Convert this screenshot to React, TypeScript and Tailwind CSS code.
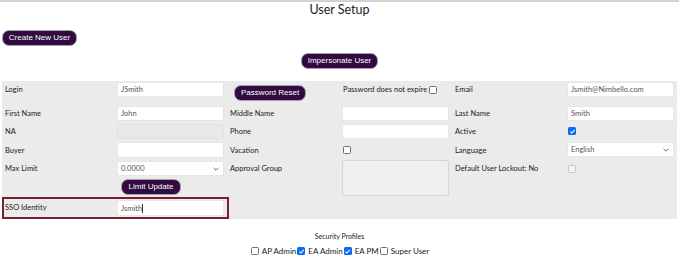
import React from "react";

const label = "text-[7.5px] leading-[15px] text-[#222] pl-[3px] whitespace-nowrap";
const inputCls =
  "w-[107px] h-[15px] bg-white border border-[#e6e6e6] text-[7.5px] leading-[13px] text-[#555] pl-[3px]";
const btn =
  "bg-[#300a40] text-white border border-[#a79dae] rounded-[7px] flex items-center justify-center font-['Liberation_Sans',Arial,sans-serif] text-[8px]";

function Check({ checked = false, disabled = false }: { checked?: boolean; disabled?: boolean }) {
  if (checked) {
    return (
      <span className="inline-flex w-[8px] h-[8px] rounded-[1.5px] bg-[#0a6cf0] items-center justify-center shrink-0">
        <svg viewBox="0 0 10 10" className="w-[7px] h-[7px]">
          <path d="M2 5.2 L4.1 7.2 L8.2 2.8" fill="none" stroke="white" strokeWidth="1.6" />
        </svg>
      </span>
    );
  }
  return (
    <span
      className={
        "inline-block w-[8px] h-[8px] rounded-[1.5px] border shrink-0 " +
        (disabled ? "border-[#c4c4c4] bg-[#f4f4f4]" : "border-[#6f6f6f] bg-white")
      }
    />
  );
}

function Select({ value }: { value: string }) {
  return (
    <div className={inputCls + " flex items-center justify-between pr-[4px]"}>
      <span>{value}</span>
      <svg viewBox="0 0 10 6" className="w-[6px] h-[4px]">
        <path d="M1 1 L5 5 L9 1" fill="none" stroke="#444" strokeWidth="1.4" />
      </svg>
    </div>
  );
}

export default function App() {
  return (
    <div className="w-[679px] h-[257px] overflow-hidden bg-white border-t-2 border-[#d2d2d2] font-['Lato',sans-serif]">
      <div className="text-center text-[12.5px] leading-[16px] text-[#222]">User Setup</div>

      <div className={btn + " ml-[2px] mt-[12px] w-[75px] h-[16px]"}>Create New User</div>

      <div className={btn + " mx-auto mt-[7px] w-[77px] h-[16px]"}>Impersonate User</div>

      <div className="ml-[2px] mt-[12px] w-[675px] h-[138px] bg-[#ebebeb] grid grid-cols-[115px_110px_115px_110px_115px_110px] grid-rows-[24px_18px_18px_19px_18px_19px_22px]">
        {/* row 1 */}
        <div className={label + " pt-[1px]"}>Login</div>
        <div className="pt-[1px]"><div className={inputCls}>JSmith</div></div>
        <div className="pt-[4px] pl-[7px]">
          <div className={btn + " w-[72px] h-[16px]"}>Password Reset</div>
        </div>
        <div className="pt-[1px] pl-[1px] flex items-center h-[17px] gap-[2px]">
          <span className="text-[7.5px] text-[#222] whitespace-nowrap">Password does not expire</span>
          <Check />
        </div>
        <div className={label + " pt-[1px]"}>Email</div>
        <div className="pt-[1px]"><div className={inputCls}>Jsmith@Nimbello.com</div></div>

        {/* row 2 */}
        <div className={label + " pt-[1px]"}>First Name</div>
        <div className="pt-[1px]"><div className={inputCls}>John</div></div>
        <div className={label + " pt-[1px]"}>Middle Name</div>
        <div className="pt-[1px]"><div className={inputCls}></div></div>
        <div className={label + " pt-[1px]"}>Last Name</div>
        <div className="pt-[1px]"><div className={inputCls}>Smith</div></div>

        {/* row 3 */}
        <div className={label + " pt-[1px]"}>NA</div>
        <div className="pt-[1px]"><div className="w-[107px] h-[15px] bg-[#e8e8e8] border border-[#e2e2e2]"></div></div>
        <div className={label + " pt-[1px]"}>Phone</div>
        <div className="pt-[1px]"><div className={inputCls}></div></div>
        <div className={label + " pt-[1px]"}>Active</div>
        <div className="pt-[4px] pl-[1px] flex items-start"><Check checked /></div>

        {/* row 4 */}
        <div className={label + " pt-[2px]"}>Buyer</div>
        <div className="pt-[1px]"><div className={inputCls + " h-[16px]"}></div></div>
        <div className={label + " pt-[2px]"}>Vacation</div>
        <div className="pt-[5px] pl-[1px] flex items-start"><Check /></div>
        <div className={label + " pt-[2px]"}>Language</div>
        <div className="pt-[1px]"><Select value="English" /></div>

        {/* row 5 */}
        <div className={label + " pt-[1px]"}>Max Limit</div>
        <div className="pt-[1px]"><Select value="0.0000" /></div>
        <div className={label + " pt-[1px]"}>Approval Group</div>
        <div className="row-span-2">
          <div className="w-[107px] h-[36px] bg-[#efefef] border border-[#d6d6d6] rounded-[2px]"></div>
        </div>
        <div className={label + " pt-[1px]"}>Default User Lockout: No</div>
        <div className="pt-[5px] pl-[1px] flex items-start"><Check disabled /></div>

        {/* row 6 */}
        <div></div>
        <div className="pt-[1px] pl-[4px]">
          <div className={btn + " w-[60px] h-[16px]"}>Limit Update</div>
        </div>
        <div></div>
        <div></div>
        <div></div>

        {/* row 7 */}
        <div className="col-span-2 w-[227px] border-2 border-[#7d1c2c] flex items-center">
          <div className="w-[113px] text-[7.5px] text-[#222] pl-[1px]">SSO Identity</div>
          <div className={inputCls + " h-[16px] flex items-center"}>
            Jsmith<span className="inline-block w-[0.5px] h-[9px] bg-[#333]"></span>
          </div>
        </div>
      </div>

      <div className="mt-[12px] text-center text-[7px] leading-[10px] text-[#222]">Security Profiles</div>

      <div className="mt-[5px] flex items-center justify-center gap-[1px] text-[8px] leading-[10px] text-[#222] pl-[1px]">
        <Check />
        <span className="ml-[2px]">AP Admin</span>
        <Check checked />
        <span className="ml-[2px]">EA Admin</span>
        <Check checked />
        <span className="ml-[2px]">EA PM</span>
        <Check />
        <span className="ml-[2px]">Super User</span>
      </div>
    </div>
  );
}
